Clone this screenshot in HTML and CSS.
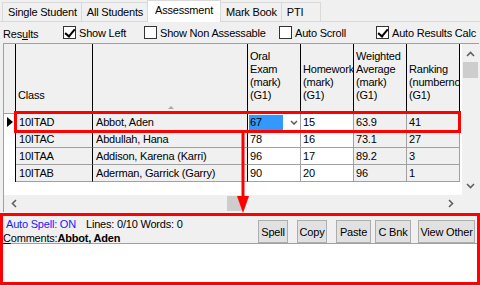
FILE: index.html
```html
<!DOCTYPE html>
<html lang="en">

<head>
    <meta charset="UTF-8">
    <title>Assessment</title>
    <link rel="stylesheet" href="styles.css">
</head>

<body>
    <!-- Tab strip -->
    <div class="tabs">
        <div class="tab">Single Student</div>
        <div class="tab">All Students</div>
        <div class="tab active">Assessment</div>
        <div class="tab">Mark Book</div>
        <div class="tab tab-pti">PTI</div>
    </div>

    <!-- Options row -->
    <div class="options">
        <span class="opt-label">Res<u>u</u>lts</span>
        <label class="check check-left"><span class="box checked"></span>Show Left</label>
        <label class="check check-nonass"><span class="box"></span>Show Non Assessable</label>
        <label class="check check-scroll"><span class="box"></span>Auto Scroll</label>
        <label class="check"><span class="box checked"></span>Auto Results Calc</label>
    </div>

    <!-- Results grid -->
    <div class="grid">
        <div class="grid-body">
            <div class="grid-area">
                <div class="row head">
                    <div class="cell ind"></div>
                    <div class="cell fixed">Class</div>
                    <div class="cell fixed sort"><span class="sort-arrow"></span></div>
                    <div class="cell">Oral Exam (mark) (G1)</div>
                    <div class="cell">Homework (mark) (G1)</div>
                    <div class="cell">Weighted Average (mark) (G1)</div>
                    <div class="cell">Ranking (numbernot (G1)</div>
                </div>
                <div class="row">
                    <div class="cell ind"><span class="pointer"></span></div>
                    <div class="cell fixed">10ITAD</div>
                    <div class="cell fixed">Abbot, Aden</div>
                    <div class="cell edit current"><span class="selected">67</span><svg class="combo" width="8" height="5" viewBox="0 0 8 5"><polyline points="1,1 4,4 7,1" /></svg></div>
                    <div class="cell edit">15</div>
                    <div class="cell">63.9</div>
                    <div class="cell">41</div>
                </div>
                <div class="row">
                    <div class="cell ind"></div>
                    <div class="cell fixed">10ITAC</div>
                    <div class="cell fixed">Abdullah, Hana</div>
                    <div class="cell edit">78</div>
                    <div class="cell edit">16</div>
                    <div class="cell">73.1</div>
                    <div class="cell">27</div>
                </div>
                <div class="row">
                    <div class="cell ind"></div>
                    <div class="cell fixed">10ITAA</div>
                    <div class="cell fixed">Addison, Karena (Karri)</div>
                    <div class="cell edit">96</div>
                    <div class="cell edit">17</div>
                    <div class="cell">89.2</div>
                    <div class="cell">3</div>
                </div>
                <div class="row">
                    <div class="cell ind"></div>
                    <div class="cell fixed">10ITAB</div>
                    <div class="cell fixed">Aderman, Garrick (Garry)</div>
                    <div class="cell edit">90</div>
                    <div class="cell edit">20</div>
                    <div class="cell">96</div>
                    <div class="cell">1</div>
                </div>
            </div>
            <div class="vscroll">
                <svg class="chev" width="9" height="6" viewBox="0 0 9 6"><polyline points="1,5 4.5,1.5 8,5" /></svg>
                <div class="vthumb"></div>
                <div class="spacer"></div>
                <svg class="chev" width="9" height="6" viewBox="0 0 9 6"><polyline points="1,1 4.5,4.5 8,1" /></svg>
            </div>
        </div>
        <div class="hscroll">
            <svg class="chev" width="6" height="9" viewBox="0 0 6 9"><polyline points="5,1 1.5,4.5 5,8" /></svg>
            <div class="hthumb"></div>
            <svg class="chev" width="6" height="9" viewBox="0 0 6 9"><polyline points="1,1 4.5,4.5 1,8" /></svg>
            <div class="corner"></div>
        </div>
    </div>

    <!-- Comments panel -->
    <div class="comments">
        <div class="comment-bar">
            <div class="comment-info">
                <div><span class="spell-on">Auto Spell: ON</span><span class="counts">Lines: 0/10 Words: 0</span></div>
                <div><u>C</u>omments:<b>Abbot, Aden</b></div>
            </div>
            <div class="buttons">
                <button class="btn btn-spell">Spell</button>
                <button class="btn btn-copy">Copy</button>
                <button class="btn btn-paste">Paste</button>
                <button class="btn btn-bank">C Bnk</button>
                <button class="btn btn-other">View Other</button>
            </div>
        </div>
        <div class="comment-text"></div>
    </div>

    <!-- Annotation overlays -->
    <div class="mark-row"></div>
    <svg class="mark-arrow" width="14" height="82" viewBox="0 0 14 82">
        <line x1="7" y1="0" x2="7" y2="66" />
        <polygon points="1,63 13,63 7,80" />
    </svg>
</body>

</html>
```

FILE: styles.css
```css
* {
    margin: 0;
    padding: 0;
    box-sizing: border-box;
}

body {
    width: 480px;
    height: 285px;
    overflow: hidden;
    position: relative;
    background-color: #f0f0f0;
    color: #000;
    font-family: 'Liberation Sans', Arial, sans-serif;
    font-size: 11px;
    letter-spacing: -0.2px;
}

/* tabs */
.tabs {
    display: flex;
    height: 22px;
    padding-left: 2px;
    border-bottom: 1px solid #d9d9d9;
}

.tab {
    height: 19px;
    margin-top: 2px;
    margin-right: -1px;
    padding: 3px 4px 0 5px;
    border: 1px solid #d9d9d9;
    border-bottom: none;
    background-color: #f0f0f0;
}

.tab.active {
    position: relative;
    z-index: 1;
    height: 22px;
    margin-top: 0;
    padding: 3px 7px 0;
    background-color: #ffffff;
}

.tab-pti {
    width: 40px;
}

/* options row */
.options {
    display: flex;
    align-items: center;
    height: 21px;
    padding-left: 3px;
}

.opt-label {
    width: 60px;
    padding-top: 3px;
}

.check {
    display: flex;
    align-items: center;
}

.check-left {
    width: 81px;
}

.check-nonass {
    width: 135px;
}

.check-scroll {
    width: 97px;
}

.box {
    width: 13px;
    height: 13px;
    margin-right: 3px;
    border: 1px solid #333;
    background-color: #fff;
    position: relative;
}

.box.checked::after {
    content: '';
    position: absolute;
    left: 3px;
    top: 0px;
    width: 4px;
    height: 8px;
    border: solid #000;
    border-width: 0 2px 2px 0;
    transform: rotate(40deg);
}

/* grid */
.grid {
    margin-left: 3px;
    width: 476px;
    border-top: 1px solid #a0a0a0;
    border-left: 1px solid #a0a0a0;
}

.grid-body {
    display: flex;
    height: 151px;
}

.grid-area {
    width: 458px;
    background-color: #fff;
}

.row {
    display: grid;
    grid-template-columns: 12px 77px 155px 53px 53px 53px 53px;
    height: 17px;
}

.cell {
    padding: 2px 2px 0;
    border-right: 1px solid #a0a0a0;
    border-bottom: 1px solid #a0a0a0;
    background-color: #f0f0f0;
    white-space: nowrap;
    overflow: hidden;
}

.cell.edit {
    background-color: #fff;
}

.cell.fixed {
    border-right-color: #000;
    padding-left: 3px;
}

.cell.ind {
    border-right-color: #000;
    border-bottom: none;
    background-color: #fff;
    position: relative;
}

.row.head {
    height: 70px;
}

.row.head .cell {
    display: flex;
    align-items: flex-end;
    padding: 0 0 11px 2px;
    line-height: 13px;
    white-space: normal;
    border-right-color: #000;
    background-color: #f0f0f0;
}

.row.head .cell.ind {
    border-bottom: 1px solid #a0a0a0;
}

.row.head .sort {
    justify-content: center;
    padding-bottom: 4px;
}

.sort-arrow {
    border: 3px solid transparent;
    border-bottom: 3px solid #a8a8a8;
    border-top: none;
}

.pointer {
    position: absolute;
    left: 3px;
    top: 3px;
    border-left: 6px solid #000;
    border-top: 5px solid transparent;
    border-bottom: 5px solid transparent;
}

.cell.current {
    display: flex;
    align-items: center;
    padding: 1px 0 1px 1px;
}

.selected {
    width: 34px;
    height: 15px;
    padding: 1px 0 0 1px;
    background-color: #3399ff;
}

.combo {
    margin-left: 7px;
}

.combo polyline,
.chev polyline {
    fill: none;
    stroke: #606060;
    stroke-width: 1.6;
}

/* scrollbars */
.vscroll {
    width: 17px;
    display: flex;
    flex-direction: column;
    align-items: center;
    padding: 7px 0 6px;
    background-color: #f0f0f0;
}

.vthumb {
    width: 15px;
    height: 16px;
    margin-top: 5px;
    background-color: #cdcdcd;
}

.spacer {
    flex: 1;
}

.hscroll {
    display: flex;
    align-items: center;
    height: 17px;
    padding-left: 7px;
    background-color: #f0f0f0;
}

.hthumb {
    width: 16px;
    height: 15px;
    margin-left: 210px;
    margin-right: 205px;
    background-color: #cdcdcd;
}

.corner {
    width: 17px;
}

/* comments panel */
.comments {
    margin-top: 1px;
    height: 72px;
    border: 3px solid #ff0000;
    display: flex;
    flex-direction: column;
}

.comment-bar {
    display: flex;
    height: 28px;
    border-bottom: 1px solid #a0a0a0;
}

.comment-info {
    line-height: 14px;
    padding-top: 1px;
}

.comment-info div:first-child {
    padding-left: 3px;
}

.spell-on {
    color: #1a1aff;
}

.counts {
    margin-left: 10px;
}

.buttons {
    display: flex;
    margin-left: auto;
    padding: 4px 2px 0 0;
}

.btn {
    height: 23px;
    margin-left: 9px;
    border: 1px solid #adadad;
    background-color: #e1e1e1;
    font-family: inherit;
    font-size: 11px;
    letter-spacing: inherit;
    color: #000;
}

.btn-spell {
    width: 30px;
}

.btn-copy {
    width: 30px;
}

.btn-paste {
    width: 35px;
}

.btn-bank {
    width: 36px;
    margin-left: 4px;
}

.btn-other {
    width: 57px;
    margin-left: 7px;
}

.comment-text {
    flex: 1;
    background-color: #fff;
}

/* red annotations */
.mark-row {
    position: absolute;
    left: 14px;
    top: 111px;
    width: 447px;
    height: 22px;
    border: 3px solid #ff0000;
}

.mark-arrow {
    position: absolute;
    left: 236px;
    top: 133px;
}

.mark-arrow line {
    stroke: #ff0000;
    stroke-width: 3;
}

.mark-arrow polygon {
    fill: #ff0000;
}
```
